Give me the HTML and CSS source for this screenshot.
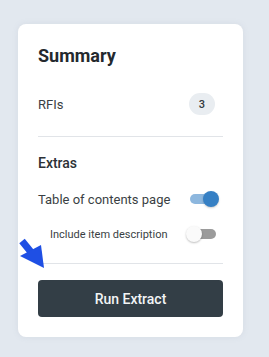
FILE: index.html
```html
<!DOCTYPE html>
<html>
<head>
<meta charset="utf-8">
<link rel="stylesheet" href="styles.css">
</head>
<body>
<div class="page">
  <div class="card">
    <h2 class="title">Summary</h2>
    <div class="row rfi-row">
      <span class="label">RFIs</span>
      <span class="badge">3</span>
    </div>
    <hr class="divider first">
    <h3 class="subtitle">Extras</h3>
    <div class="row toc-row">
      <span class="label">Table of contents page</span>
      <span class="switch on"><span class="track"></span><span class="thumb"></span></span>
    </div>
    <div class="row sub-row">
      <span class="label small">Include item description</span>
      <span class="switch off"><span class="track"></span><span class="thumb"></span></span>
    </div>
    <hr class="divider second">
    <button class="run">Run Extract</button>
  </div>
  <svg class="arrow" width="34" height="34" viewBox="0 0 34 34">
    <line x1="8" y1="5" x2="21" y2="21" stroke="#1f4fe4" stroke-width="7" stroke-linecap="butt"/>
    <polygon points="6,20 27,9 30,32" fill="#1f4fe4"/>
  </svg>
</div>
</body>
</html>
```

FILE: styles.css
```css
html, body {
  margin: 0;
  padding: 0;
  background: #e2e8ef;
  font-family: Roboto, "Noto Sans", sans-serif;
}

.page {
  position: relative;
  width: 269px;
  height: 357px;
  padding: 24px 0 0 18px;
  box-sizing: border-box;
}

.card {
  width: 225px;
  height: 313px;
  box-sizing: border-box;
  background: #ffffff;
  border-radius: 8px;
  box-shadow: 0 0 6px rgba(120, 135, 155, 0.12);
  padding: 22px 20px 20px 20px;
  display: flex;
  flex-direction: column;
}

.title {
  margin: 0;
  font-size: 18px;
  line-height: 20px;
  font-weight: 700;
  color: #24292e;
}

.row {
  display: flex;
  align-items: center;
  justify-content: space-between;
}

.rfi-row {
  margin-top: 27px;
  height: 22px;
}

.label {
  font-size: 13px;
  color: #3a3f44;
}

.label.small {
  font-size: 11px;
}

.badge {
  width: 26px;
  height: 22px;
  border-radius: 11px;
  background: #e9edf1;
  font-size: 11px;
  font-weight: 500;
  color: #33393f;
  display: flex;
  align-items: center;
  justify-content: center;
  margin-right: 8px;
}

.divider {
  border: 0;
  border-top: 1px solid #e1e4e8;
  margin: 0;
  width: 100%;
}

.divider.first {
  margin-top: 21px;
}

.subtitle {
  margin: 18px 0 0 0;
  font-size: 14px;
  line-height: 17px;
  font-weight: 500;
  color: #2c3136;
}

.toc-row {
  margin-top: 19px;
  height: 16px;
}

.sub-row {
  margin-top: 19px;
  height: 16px;
  padding-left: 12px;
}

.switch {
  position: relative;
  width: 26px;
  height: 16px;
  margin-right: 7px;
}

.track {
  position: absolute;
  left: 0;
  top: 3px;
  width: 26px;
  height: 10px;
  border-radius: 5px;
}

.thumb {
  position: absolute;
  top: 0;
  width: 16px;
  height: 16px;
  border-radius: 50%;
}

.on .track {
  background: #8db7de;
}

.on .thumb {
  right: -3px;
  background: #3680c4;
  box-shadow: 0 1px 2px rgba(0, 0, 0, 0.2);
}

.off .track {
  background: #9b9b9b;
}

.off .thumb {
  left: -4px;
  background: #fafafa;
  box-shadow: 0 1px 2px rgba(0, 0, 0, 0.25);
}

.divider.second {
  margin-top: 21px;
}

.run {
  margin-top: 16px;
  height: 37px;
  width: 100%;
  border: 0;
  border-radius: 4px;
  background: #333e46;
  color: #f2f4f5;
  font-family: Roboto, "Noto Sans", sans-serif;
  font-size: 14px;
  font-weight: 500;
}

.arrow {
  position: absolute;
  left: 14px;
  top: 236px;
}
```
